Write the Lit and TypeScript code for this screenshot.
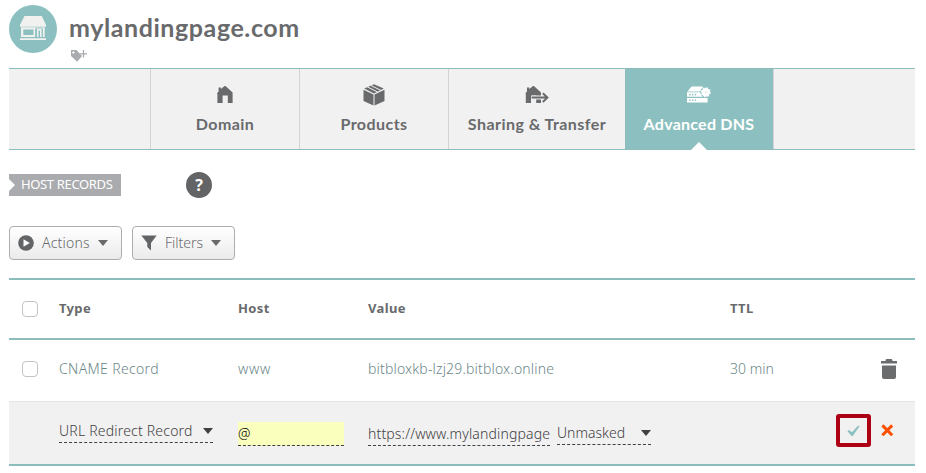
import { LitElement, html, css } from "lit";
import { customElement } from "lit/decorators.js";
import { classMap } from "lit/directives/class-map.js";

const storeIcon = html`<svg width="48" height="48" viewBox="0 0 48 48">
  <circle cx="24" cy="24" r="24" fill="#8cc0c0" />
  <path fill="#f1f1f0" d="M15.5 11h17.3l4.2 9v1a1.3 1 0 0 1-2.6 0 1.3 1 0 0 1-2.6 0 1.3 1 0 0 1-2.6 0 1.3 1 0 0 1-2.6 0 1.3 1 0 0 1-2.6 0 1.3 1 0 0 1-2.6 0 1.3 1 0 0 1-2.6 0 1.3 1 0 0 1-2.6 0 1.3 1 0 0 1-2.6 0 1.3 1 0 0 1-2.6 0V20z" />
  <path fill="#f1f1f0" fill-rule="evenodd" d="M12 22.6h14.2V32H12zM14.3 24.6v5.4h10.2v-5.4zM28 24h4.6v8H31v-6.4h-1.5V32H28zM33.9 22.6h1.8V32h-1.8z" />
  <path fill="#f1f1f0" d="M12 22.4h23.7v1H12zM11 33.2h26v1.7H11z" />
</svg>`;

const tagIcon = html`<svg width="18" height="14" viewBox="0 0 18 14">
  <path fill="#a9abae" fill-rule="evenodd" d="M1 1h5.5L12 7 7.2 12.8 1 7zM3.4 2.3a1.2 1.2 0 1 0 .01 0z" />
  <path fill="none" stroke="#fff" stroke-width="2.4" d="M13.5 1v6M10.6 4.8h6" />
  <path fill="none" stroke="#a9abae" stroke-width="1.3" d="M13.5 1v7.6M10 4.8h7" />
</svg>`;

const house = "M0 7.2 1.6 5.6V1.5h2.3v1.6L7.6 0 8.5 0 15.6 6.6V17H10.8V9.6H5.6V17H.4V8z";

const homeIcon = html`<svg width="26" height="22" viewBox="0 0 26 22">
  <path fill="#696a6c" transform="translate(5 2)" d="${house}" />
</svg>`;

const boxIcon = html`<svg width="26" height="22" viewBox="0 0 26 22">
  <path fill="#696a6c" d="M12.5 10.6v10.8L2.5 17V5.8zM13.5 10.6v10.8l10-4.4V5.8zM13 .2l9.8 4.3L13 9.4 3.2 4.5z" />
  <path fill="none" stroke="#f1f1f1" stroke-width="1" d="M6.2 2.8l10.2 5.1M9.6 1.3l10.2 5" />
</svg>`;

const transferIcon = html`<svg width="26" height="22" viewBox="0 0 26 22">
  <path fill="#696a6c" transform="translate(1.4 2)" d="${house}" />
  <path fill="none" stroke="#f1f1f1" stroke-width="4" d="M8 13.6h14M18.6 9l4.6 4.6-4.6 4.6" />
  <path fill="none" stroke="#696a6c" stroke-width="2" d="M7.6 13.6h15.4M18.8 9.2l4.6 4.4-4.6 4.4" />
</svg>`;

const serverIcon = html`<svg width="26" height="22" viewBox="0 0 26 22">
  <path fill="#fff" d="M5.6 2.4h11l3 5H1.4zM1 8.2h20.6v4.6H1zM1 14h20.6v4.4H1z" />
  <path fill="none" stroke="#8cc0c0" stroke-width="1.6" d="M3.2 10.6h1.3M6 10.6h1.3M8.8 10.6h1.3M3.2 16.2h1.3M6 16.2h1.3M8.8 16.2h1.3" />
  <circle cx="19.8" cy="8.2" r="5.5" fill="#8cc0c0" />
  <circle cx="19.8" cy="8.2" r="4.2" fill="#fff" />
  <circle cx="19.8" cy="8.2" r="4.4" fill="none" stroke="#fff" stroke-width="1.2" stroke-dasharray="1.75 1.7" />
  <circle cx="19.8" cy="8.2" r="1" fill="#d9ebeb" />
</svg>`;

const playIcon = html`<svg width="16" height="16" viewBox="0 0 16 16">
  <circle cx="8" cy="8" r="7.8" fill="#636466" /><path fill="#fff" d="M5.5 4.2v7.6L11.8 8z" />
</svg>`;

const funnelIcon = html`<svg width="16" height="16" viewBox="0 0 16 16">
  <path fill="#636466" d="M.3.6h15.4L10 8v7.6L6.3 12V8z" />
</svg>`;

const trashIcon = html`<svg width="16" height="20" viewBox="0 0 16 20">
  <path fill="#6b6c6e" d="M0 2h4.6V.8l.8-.8h5.2l.8.8V2H16v2.6H0zM1 6.4h14V18q0 2-2 2H3q-2 0-2-2z" />
</svg>`;

const checkIcon = html`<svg width="13" height="12" viewBox="0 0 13 12">
  <path fill="#8cc0c0" d="M.4 6.2 2 4.9l3 2.4L11.2.6l1.2.9L5.7 11H4.6z" />
</svg>`;

const crossIcon = html`<svg width="13" height="13" viewBox="0 0 13 13">
  <path fill="none" stroke="#fd4f00" stroke-width="3" d="M1.4 1.4l9.8 9.8M11.2 1.4l-9.8 9.8" />
</svg>`;

const tabs = [
  { label: "Domain", cls: "domain", icon: homeIcon },
  { label: "Products", cls: "products", icon: boxIcon },
  { label: "Sharing & Transfer", cls: "sharing", icon: transferIcon },
  { label: "Advanced DNS", cls: "dns", icon: serverIcon },
];

@customElement("app-root")
export class AppRoot extends LitElement {
  static styles = css`
    :host {
      display: block;
      box-sizing: border-box;
      height: 473px;
      padding: 0 11px 0 9px;
      overflow: hidden;
      background: #fff;
      color: #696a6c;
      font: 14px/20px "Noto Sans", Lato, sans-serif;
    }
    * { box-sizing: border-box; }
    svg { display: block; flex: none; }
    .head { height: 68px; display: flex; gap: 12px; padding-top: 5px; }
    .heading { display: flex; flex-direction: column; }
    h1 {
      margin: 6px 0 0; height: 32px; white-space: nowrap;
      font: 700 25px/32px Lato, sans-serif; letter-spacing: 0.58px;
    }
    .tag { margin: 6px 0 0 1px; }
    nav {
      height: 82px; display: flex; padding-left: 141px;
      background: #f1f1f1;
      border-top: 1px solid #8cbcbc; border-bottom: 1px solid #8cbcbc;
    }
    .tab {
      position: relative; width: 149px; padding-top: 15px;
      border-left: 1px solid #d3d5d5;
      display: flex; flex-direction: column; align-items: center; gap: 8px;
      font: 700 16px/20px Lato, sans-serif; white-space: nowrap;
    }
    .active {
      width: 149px; background: #8cc0c0; color: #fff;
      border-left: 0; border-right: 1px solid #d3d5d5;
    }
    .active::after {
      content: ""; position: absolute; left: 66px; bottom: -1px;
      border: 8px solid transparent; border-top: 0; border-bottom-color: #fff;
    }
    .domain { letter-spacing: 0.4px; }
    .products { letter-spacing: 0.45px; }
    .sharing { width: 177px; letter-spacing: 0.45px; }
    .dns { letter-spacing: 0.25px; }
    .section { display: flex; align-items: center; margin-top: 22px; height: 26px; }
    .ribbon {
      width: 112px; height: 22px; padding-left: 12px;
      background: #a9abae; color: #fff; font: 400 13px/21px "Noto Sans", sans-serif;
      letter-spacing: -0.35px; white-space: nowrap;
      clip-path: polygon(0 0, 100% 0, 100% 100%, 0 100%, 0 77%, 6px 50%, 0 23%);
    }
    .help {
      width: 26px; height: 26px; margin-left: 65px; border-radius: 50%;
      background: #636466; color: #fff; text-align: center;
      font: 700 16px/26px "Noto Sans", sans-serif;
    }
    .tools { display: flex; gap: 10px; margin-top: 28px; }
    .btn {
      width: 113px; height: 34px; display: flex; align-items: center;
      padding: 0 0 1px 8px; gap: 8px;
      border: 1px solid #adadad; border-radius: 4px;
      background: linear-gradient(#fff, #ebebeb);
      letter-spacing: 0.2px;
    }
    .btn.filters { width: 103px; letter-spacing: 0; }
    .caret { width: 0; border: 5px solid transparent; border-top: 6px solid #696a6c; border-bottom: 0; }
    .grid {
      display: grid; grid-template-columns: 50px 179px 130px 362px 1fr;
      align-items: center;
    }
    .thead {
      margin-top: 18px; height: 62px; font-weight: 700; font-size: 13px; letter-spacing: 0.35px;
      border-top: 2px solid #8cbcbc; border-bottom: 2px solid #8cbcbc;
    }
    .thead span { margin-top: -2px; }
    .row { height: 61px; color: #6b8788; padding-bottom: 4px; }
    .light { font-weight: 300; }
    .box { width: 16px; height: 16px; margin-left: 13px; border: 1px solid #c2c3c5; border-radius: 4px; background: #fff; }
    .last { display: flex; justify-content: space-between; align-items: center; padding-right: 18px; }
    .t-cname { letter-spacing: 0.35px; }
    .t-www { letter-spacing: 0.7px; }
    .t-bit { letter-spacing: 0.17px; }
    .t-type { letter-spacing: 0.2px; }
    .t-url { letter-spacing: 0.15px; }
    .edit {
      height: 65px; background: #f1f1f1; border-top: 1px solid #e4e4e4;
      border-bottom: 2px solid #8cbcbc; color: #3f4042; align-items: start;
      font-weight: 300;
    }
    .field { display: flex; justify-content: space-between; align-items: center; border-bottom: 1px dashed #3f4042; white-space: nowrap; }
    .edit .caret { border-top-color: #3f4042; }
    .type { width: 154px; height: 24px; margin-top: 17px; }
    .host { width: 106px; height: 24px; margin-top: 20px; background: #faffbd; color: #000; }
    .value { display: flex; gap: 7px; margin-top: 20px; }
    .url { width: 182px; height: 24px; overflow: hidden; }
    .mask { width: 94px; height: 23px; }
    .ops { display: flex; align-items: center; gap: 10px; margin: 12px 0 0 106px; height: 33px; }
    .ok {
      width: 35px; height: 33px; border: 4px solid #ad0014; border-radius: 3px;
      display: flex; align-items: center; justify-content: center;
    }
  `;

  render() {
    return html`
      <header class="head">
        ${storeIcon}
        <div class="heading">
          <h1>mylandingpage.com</h1>
          <span class="tag">${tagIcon}</span>
        </div>
      </header>
      <nav>
        ${tabs.map(
          (t) => html`<div class=${classMap({ tab: true, [t.cls]: true, active: t.cls === "dns" })}>
            ${t.icon}<span>${t.label}</span>
          </div>`
        )}
      </nav>
      <div class="section">
        <span class="ribbon">HOST RECORDS</span>
        <span class="help">?</span>
      </div>
      <div class="tools">
        <div class="btn light">${playIcon}<span>Actions</span><i class="caret"></i></div>
        <div class="btn light filters">${funnelIcon}<span>Filters</span><i class="caret"></i></div>
      </div>
      <div class="grid thead">
        <i class="box"></i><span>Type</span><span>Host</span><span>Value</span><span>TTL</span>
      </div>
      <div class="grid row light">
        <i class="box"></i>
        <span class="t-cname">CNAME Record</span>
        <span class="t-www">www</span>
        <span class="t-bit">bitbloxkb-lzj29.bitblox.online</span>
        <span class="last"><span>30 min</span>${trashIcon}</span>
      </div>
      <div class="grid edit">
        <span></span>
        <div class="field type"><span class="t-type">URL Redirect Record</span><i class="caret"></i></div>
        <div class="field host">@</div>
        <div class="value">
          <div class="field url"><span class="t-url">https://www.mylandingpage</span></div>
          <div class="field mask"><span>Unmasked</span><i class="caret"></i></div>
        </div>
        <div class="ops"><span class="ok">${checkIcon}</span>${crossIcon}</div>
      </div>
    `;
  }
}
